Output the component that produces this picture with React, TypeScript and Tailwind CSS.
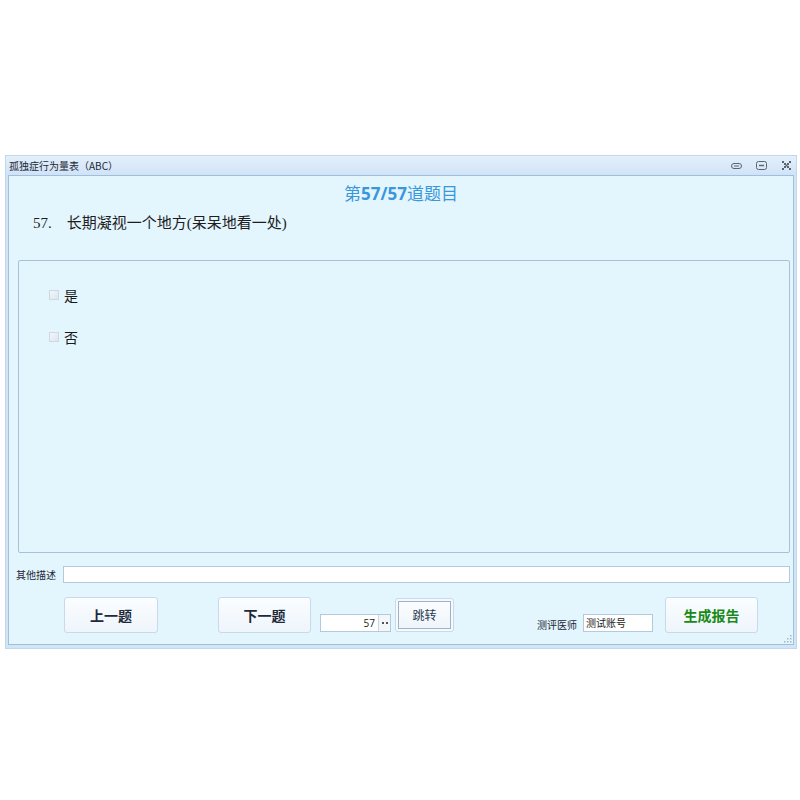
import React, { useState } from 'react';

const SANS = "font-['Microsoft_YaHei','Noto_Sans_CJK_SC',sans-serif]";

// Flat "Office blue" push button used in the footer bar
const PushButton = ({
  label,
  className = '',
  textClass = 'text-[#1d2a3a]',
}: {
  label: string;
  className?: string;
  textClass?: string;
}) => (
  <button
    type="button"
    className={`flex items-center justify-center rounded-[3px] border border-[#c7d9ea] bg-gradient-to-b from-[#fbfdff] to-[#eef5fb] text-[14px] ${textClass} ${className}`}
  >
    {label}
  </button>
);

const WinGlyph = ({ kind }: { kind: 'min' | 'max' | 'close' }) => (
  <svg width="11" height="9" viewBox="0 0 11 9" className="text-[#5a6470]">
    {kind === 'min' && (
      <>
        <rect x="0.5" y="2.5" width="10" height="5" rx="2.5" fill="none" stroke="currentColor" />
        <line x1="3" y1="5" x2="8" y2="5" stroke="currentColor" />
      </>
    )}
    {kind === 'max' && (
      <>
        <rect x="0.5" y="0.5" width="10" height="8" rx="2" fill="none" stroke="currentColor" />
        <line x1="3" y1="4.5" x2="8" y2="4.5" stroke="currentColor" strokeWidth="1.4" />
      </>
    )}
    {kind === 'close' && (
      <g fill="currentColor">
        <rect x="1" y="0" width="2" height="2" />
        <rect x="8" y="0" width="2" height="2" />
        <rect x="3" y="2" width="2" height="2" />
        <rect x="6" y="2" width="2" height="2" />
        <rect x="4.5" y="3.5" width="2" height="2" />
        <rect x="3" y="5" width="2" height="2" />
        <rect x="6" y="5" width="2" height="2" />
        <rect x="1" y="7" width="2" height="2" />
        <rect x="8" y="7" width="2" height="2" />
      </g>
    )}
  </svg>
);

const Choice = ({ text, checked, onToggle }: { text: string; checked: boolean; onToggle: () => void }) => (
  <label className="flex items-center cursor-pointer" onClick={onToggle}>
    <span className="w-[10px] h-[10px] border border-[#cdd8e2] bg-gradient-to-br from-[#f2f6f9] to-[#dde6ee] flex items-center justify-center text-[8px] leading-none text-[#333]">
      {checked ? '✓' : ''}
    </span>
    <span className={`ml-[5px] text-[14px] leading-[18px] text-[#1a1a1a] ${SANS}`}>{text}</span>
  </label>
);

export default function App() {
  const [answer, setAnswer] = useState<string | null>(null);

  return (
    <div className="w-[800px] h-[800px] bg-white pt-[155px] pl-[5px]">
      {/* window frame */}
      <div className="w-[792px] bg-[#d2e5f7] border border-[#c0d8ee] pb-[3px]">
        {/* title bar */}
        <div className="h-[19px] flex items-center bg-gradient-to-b from-[#e4f0fb] to-[#d0e3f6]">
          <span className={`ml-[3px] text-[10px] text-[#1c2836] ${SANS}`}>孤独症行为量表（ABC）</span>
          <div className="ml-auto flex items-center gap-[14px] mr-[4px]">
            <WinGlyph kind="min" />
            <WinGlyph kind="max" />
            <WinGlyph kind="close" />
          </div>
        </div>

        {/* client area */}
        <div className="relative mx-[2px] h-[470px] bg-[#e3f5fd] border border-[#9fbfdd]">
          <div className={`pt-[7px] text-center text-[17px] leading-[20px] text-[#3a97dc] ${SANS}`}>
            第<span className="font-bold font-['Open_Sans','Liberation_Sans',sans-serif]">57/57</span>道题目
          </div>

          <div className="mt-[9px] pl-[24px] text-[15px] leading-[20px] text-[#1e1e1e] font-['Liberation_Serif','Noto_Sans_CJK_SC',serif]">
            57.&nbsp;&nbsp;&nbsp;&nbsp;长期凝视一个地方(呆呆地看一处)
          </div>

          {/* answer group */}
          <div className="mt-[27px] ml-[9px] w-[772px] h-[293px] border border-[#a8c1d8] rounded-[2px] pl-[30px] pt-[25px] flex flex-col gap-[24px]">
            <Choice text="是" checked={answer === 'y'} onToggle={() => setAnswer('y')} />
            <Choice text="否" checked={answer === 'n'} onToggle={() => setAnswer('n')} />
          </div>

          {/* remarks */}
          <div className="mt-[13px] flex items-center">
            <span className={`ml-[7px] w-[47px] text-[10px] text-[#1c2836] ${SANS}`}>其他描述</span>
            <input className="w-[727px] h-[17px] bg-white border border-[#b5c9dc] outline-none" />
          </div>

          {/* footer bar */}
          <div className={`mt-[14px] flex items-start ${SANS}`}>
            <PushButton label="上一题" className="ml-[55px] w-[94px] h-[36px] font-bold" />
            <PushButton label="下一题" className="ml-[60px] w-[93px] h-[36px] font-bold" />

            <div className="ml-[9px] mt-[17px] w-[71px] h-[18px] flex bg-white border border-[#b5c9dc]">
              <span className="flex-1 text-right pr-[3px] text-[10px] leading-[16px] text-[#222] font-['Open_Sans',sans-serif]">57</span>
              <span className="w-[12px] border-l border-[#c8d6e3] bg-[#f3f7fa] flex items-center justify-center gap-[2px]">
                <span className="w-[2px] h-[2px] bg-[#555]" />
                <span className="w-[2px] h-[2px] bg-[#555]" />
              </span>
            </div>

            <div className="ml-[4px] mt-[1px] w-[59px] h-[34px] rounded-[3px] border border-[#c7d9ea] p-[2px] bg-[#f6fafd]">
              <div className="w-full h-full border border-[#9bb3c9] bg-gradient-to-b from-[#fbfdff] to-[#eef5fb] flex items-center justify-center text-[12px] text-[#2a3a50]">
                跳转
              </div>
            </div>

            <span className="ml-[83px] mt-[21px] text-[10px] leading-[14px] text-[#1c2836]">测评医师</span>
            <div className="ml-[6px] mt-[17px] w-[70px] h-[18px] bg-white border border-[#b5c9dc] pl-[2px] text-[10px] leading-[16px] text-[#222]">
              测试账号
            </div>

            <PushButton
              label="生成报告"
              className="ml-[12px] w-[93px] h-[36px] font-bold"
              textClass="text-[#188a18]"
            />
          </div>

          {/* size grip */}
          <svg width="8" height="8" viewBox="0 0 8 8" className="absolute right-[1px] bottom-[1px]">
            <g fill="#9fb6cc">
              <rect x="6" y="0" width="1.5" height="1.5" />
              <rect x="3" y="3" width="1.5" height="1.5" />
              <rect x="6" y="3" width="1.5" height="1.5" />
              <rect x="0" y="6" width="1.5" height="1.5" />
              <rect x="3" y="6" width="1.5" height="1.5" />
              <rect x="6" y="6" width="1.5" height="1.5" />
            </g>
          </svg>
        </div>
      </div>
    </div>
  );
}
